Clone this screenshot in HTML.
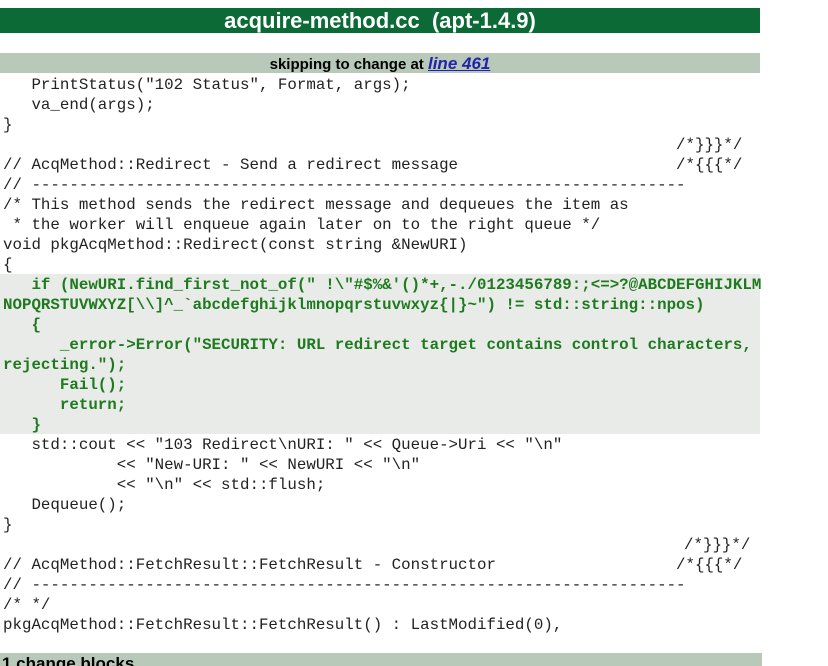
<!DOCTYPE html>
<html><head><meta charset="utf-8"><style>
body{margin:0;background:#fff;width:828px;height:666px;overflow:hidden;position:relative;font-family:"Liberation Sans",sans-serif}
.title{position:absolute;left:0;top:8px;width:760px;height:25px;background:#0b6a35;color:#fff;font-weight:bold;font-size:22px;line-height:25px;text-align:center}
.skip{position:absolute;left:0;top:53px;width:760px;height:20px;background:#b9c9b9;font-weight:bold;font-size:15px;line-height:21px;text-align:center;color:#000}
.skip a{color:#2222aa;font-style:italic;text-decoration:underline;font-size:17px}
.hl{position:absolute;left:0;top:274px;width:760px;height:160px;background:#e9ebe9}
.code{position:absolute;left:3px;top:75px;font-family:"Liberation Mono",monospace;font-size:15.8px;line-height:20px;color:#222;white-space:pre}
.l{height:20px;position:relative}
.g{color:#1e7a1e;font-weight:bold}
.r{position:absolute;top:0}
.bot{position:absolute;left:0;top:653px;width:760px;height:13px;background:#b9c9b9;font-weight:bold;font-size:17px;line-height:22px;padding-left:2px;overflow:hidden}
</style></head><body>
<div class="title">acquire-method.cc &nbsp;(apt-1.4.9)</div>
<div class="skip">skipping to change at <a>line 461</a></div>
<div class="hl"></div>
<div class="code"><div class="l">   PrintStatus("102 Status", Format, args);</div><div class="l">   va_end(args);</div><div class="l">}</div><div class="l"><span class="r" style="left:673px">/*}}}*/</span></div><div class="l">// AcqMethod::Redirect - Send a redirect message<span class="r" style="left:673px">/*{{{*/</span></div><div class="l">// ---------------------------------------------------------------------</div><div class="l">/* This method sends the redirect message and dequeues the item as</div><div class="l"> * the worker will enqueue again later on to the right queue */</div><div class="l">void pkgAcqMethod::Redirect(const string &amp;NewURI)</div><div class="l">{</div><div class="l g">   if (NewURI.find_first_not_of(" !\"#$%&amp;'()*+,-./0123456789:;&lt;=&gt;?@ABCDEFGHIJKLM</div><div class="l g">NOPQRSTUVWXYZ[\\]^_`abcdefghijklmnopqrstuvwxyz{|}~") != std::string::npos)</div><div class="l g">   {</div><div class="l g">      _error-&gt;Error("SECURITY: URL redirect target contains control characters,</div><div class="l g">rejecting.");</div><div class="l g">      Fail();</div><div class="l g">      return;</div><div class="l g">   }</div><div class="l">   std::cout &lt;&lt; "103 Redirect\nURI: " &lt;&lt; Queue-&gt;Uri &lt;&lt; "\n"</div><div class="l">            &lt;&lt; "New-URI: " &lt;&lt; NewURI &lt;&lt; "\n"</div><div class="l">            &lt;&lt; "\n" &lt;&lt; std::flush;</div><div class="l">   Dequeue();</div><div class="l">}</div><div class="l"><span class="r" style="left:681px">/*}}}*/</span></div><div class="l">// AcqMethod::FetchResult::FetchResult - Constructor<span class="r" style="left:673px">/*{{{*/</span></div><div class="l">// ---------------------------------------------------------------------</div><div class="l">/* */</div><div class="l">pkgAcqMethod::FetchResult::FetchResult() : LastModified(0),</div></div>
<div class="bot">1 change blocks</div>
</body></html>
